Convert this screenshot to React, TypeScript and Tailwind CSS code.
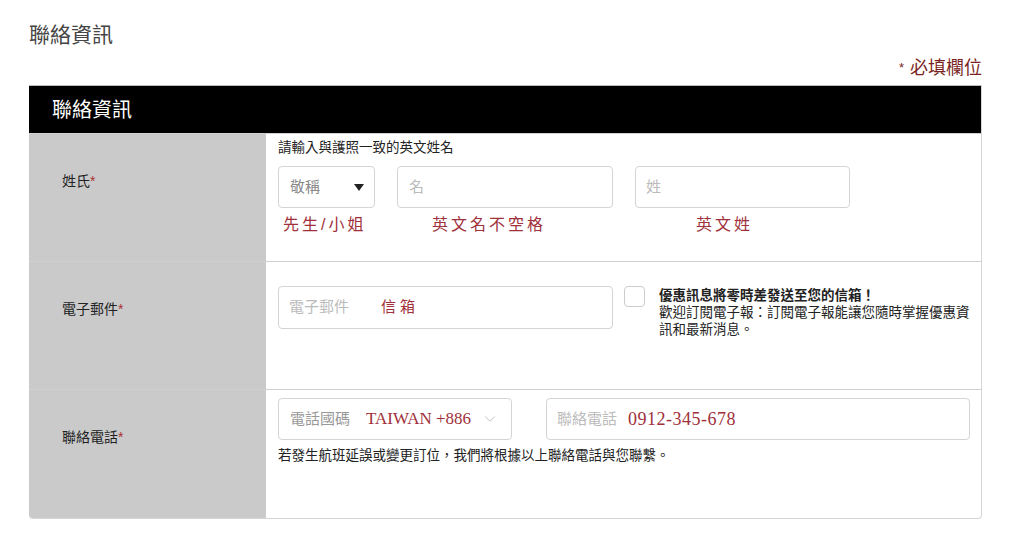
import { ChevronDown } from 'lucide-react';

const cjk = "font-['Liberation_Sans','Noto_Sans_CJK_TC',sans-serif]";
const serif = "font-['Liberation_Serif','Noto_Sans_CJK_TC',serif]";

export default function App() {
  return (
    <div className={`${cjk} w-[1024px] h-[547px] bg-white`}>
      <div className="pl-[29px] pt-[21px] text-[21px] leading-[28px] text-[#444]">聯絡資訊</div>
      <div className="flex justify-end pr-[42px] pt-[8px] text-[18px] leading-[22px] text-[#7a1f22]">
        <span className="text-[13px] mr-[6px] self-start">*</span>必填欄位
      </div>

      <div className="ml-[29px] mt-[6px] w-[953px] border-r border-b border-[#d6d6d6] rounded-b-[4px] overflow-hidden">
        <div className="h-[48px] bg-black text-white text-[20px] flex items-center pl-[23px] border-t border-[#bbb]">
          聯絡資訊
        </div>

        {/* 姓氏 */}
        <div className="flex h-[128px] border-t border-[#d0d0d0]">
          <div className="w-[237px] shrink-0 bg-[#cacaca] pl-[33px] pt-[37px] text-[14px] text-[#222]">
            姓氏<span className="text-[#a33]">*</span>
          </div>
          <div className="flex-1 pl-[12px] pt-[5px]">
            <div className="text-[13.5px] leading-[18px] text-[#222]">請輸入與護照一致的英文姓名</div>
            <div className="flex mt-[9px]">
              <div className="w-[97px] h-[42px] border border-[#d4d4d4] rounded-[4px] flex items-center justify-between pl-[11px] pr-[10px] text-[15px] text-[#888]">
                敬稱
                <svg width="10" height="7" viewBox="0 0 10 7"><path d="M0 0h10L5 7z" fill="#222" /></svg>
              </div>
              <div className="ml-[22px] w-[216px] h-[42px] border border-[#d4d4d4] rounded-[4px] flex items-center pl-[11px] text-[15px] text-[#bbb]">名</div>
              <div className="ml-[22px] w-[215px] h-[42px] border border-[#d4d4d4] rounded-[4px] flex items-center pl-[10px] text-[15px] text-[#bbb]">姓</div>
            </div>
            <div className="flex mt-[6px] text-[16px] leading-[22px] text-[#a0303a] tracking-[3px]">
              <span className="ml-[5px] w-[149px]">先生/小姐</span>
              <span className="w-[264px]">英文名不空格</span>
              <span>英文姓</span>
            </div>
          </div>
        </div>

        {/* 電子郵件 */}
        <div className="flex h-[128px] border-t border-[#d0d0d0]">
          <div className="w-[237px] shrink-0 bg-[#cacaca] pl-[33px] pt-[37px] text-[14px] text-[#222]">
            電子郵件<span className="text-[#a33]">*</span>
          </div>
          <div className="flex-1 pl-[12px] pt-[24px] flex">
            <div className="w-[335px] h-[43px] border border-[#d4d4d4] rounded-[4px] flex items-center pl-[10px] text-[15px]">
              <span className="text-[#bbb]">電子郵件</span>
              <span className="ml-[32px] text-[#a0303a] tracking-[4px]">信箱</span>
            </div>
            <div className="ml-[11px] w-[21px] h-[21px] border border-[#ccc] rounded-[4px] shrink-0" />
            <div className="ml-[14px] text-[13.5px] leading-[17px] text-[#222] w-[318px] pt-[1px]">
              <div className="font-bold">優惠訊息將零時差發送至您的信箱！</div>
              <div>歡迎訂閱電子報：訂閱電子報能讓您隨時掌握優惠資訊和最新消息。</div>
            </div>
          </div>
        </div>

        {/* 聯絡電話 */}
        <div className="flex h-[129px] border-t border-[#d0d0d0]">
          <div className="w-[237px] shrink-0 bg-[#cacaca] pl-[33px] pt-[37px] text-[14px] text-[#222]">
            聯絡電話<span className="text-[#a33]">*</span>
          </div>
          <div className="flex-1 pl-[12px] pt-[8px]">
            <div className="flex">
              <div className="w-[234px] h-[42px] border border-[#d4d4d4] rounded-[4px] flex items-center pl-[11px] pr-[12px] text-[15px] whitespace-nowrap">
                <span className="text-[#999]">電話國碼</span>
                <span className={`${serif} ml-[16px] text-[17px] text-[#a0303a]`}>TAIWAN +886</span>
                <ChevronDown className="ml-auto w-[18px] h-[18px] text-[#bbb] shrink-0" strokeWidth={1.2} />
              </div>
              <div className="ml-[34px] w-[424px] h-[42px] border border-[#d4d4d4] rounded-[4px] flex items-center pl-[10px] text-[15px] whitespace-nowrap">
                <span className="text-[#bbb]">聯絡電話</span>
                <span className={`${serif} ml-[11px] text-[18px] text-[#a0303a] tracking-[0.5px]`}>0912-345-678</span>
              </div>
            </div>
            <div className="mt-[7px] text-[13.5px] leading-[18px] text-[#222]">
              若發生航班延誤或變更訂位，我們將根據以上聯絡電話與您聯繫。
            </div>
          </div>
        </div>
      </div>
    </div>
  );
}
